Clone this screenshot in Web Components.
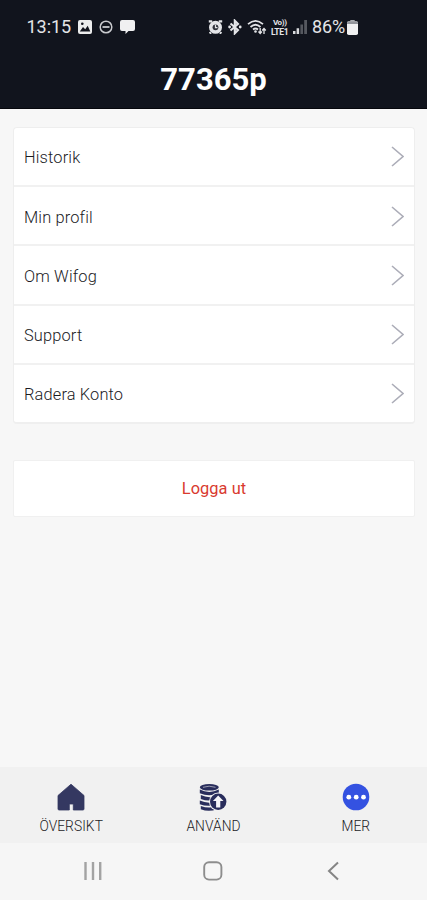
<!DOCTYPE html>
<html lang="sv">
<head>
<meta charset="utf-8">
<title>77365p</title>
<style>
html,body{margin:0;height:100%}
body{font-family:Roboto,"Liberation Sans",sans-serif;background:#f7f7f7;color:#1c1c1f}
</style>
</head>
<body>
<wifog-app></wifog-app>
<script>
function define(name, markup) {
  const template = document.createElement('template');
  template.innerHTML = markup;
  customElements.define(name, class extends HTMLElement {
    constructor() {
      super();
      this.attachShadow({mode: 'open'}).append(template.content.cloneNode(true));
    }
  });
}

define('status-bar', `
<style>
:host{display:flex;align-items:center;height:54px;box-sizing:border-box;padding:0 69px 0 26.5px;color:#e4e5e8;font-size:18px;line-height:20px}
svg{display:block;flex:none}
.left,.right{display:flex;align-items:center}
.right{margin-left:auto}
.time{width:45px;letter-spacing:-.05px}
.lte{width:19px;margin-left:4px;font-size:8.5px;line-height:8px;font-weight:700;letter-spacing:-.3px;white-space:nowrap}
.lte span{display:block;height:8px;line-height:8px}
.lte span:first-child{padding-left:2px;font-size:8px;margin-bottom:1px;letter-spacing:-.3px}
.pct{margin-left:5px;letter-spacing:-.1px}
</style>
<div class="left">
<span class="time">13:15</span>
<svg style="margin-left:6.5px" width="14" height="14" viewBox="0 0 14 14"><rect width="14" height="14" rx="2" fill="#eceded"/><path d="M1.8 11.5 5 7l2.2 2.3L9.7 5.8l2.6 5.7z" fill="#10131c"/><circle cx="4.3" cy="3.8" r="1.3" fill="#10131c"/></svg>
<svg style="margin-left:7px" width="14" height="14" viewBox="0 0 14 14"><circle cx="7" cy="7" r="5.8" fill="none" stroke="#c9cace" stroke-width="1.5"/><path d="M3.5 7h7" stroke="#c9cace" stroke-width="1.8"/></svg>
<svg style="margin-left:7px" width="15" height="14" viewBox="0 0 15 14"><path d="M2 0h11q2 0 2 2v7q0 2-2 2H8.5L5.5 14v-3H2Q0 11 0 9V2Q0 0 2 0z" fill="#f0f0f1"/></svg>
</div>
<div class="right">
<svg width="15" height="14" viewBox="0 0 15 14"><path d="M.8 1.4h3.4M10.8 1.4h3.4M3 12.5l-1.4 1M12 12.5l1.4 1" stroke="#e4e5e8" stroke-width="2.4"/><circle cx="7.5" cy="7.3" r="6.5" fill="#e4e5e8"/><circle cx="7.5" cy="7.3" r="2.9" fill="#30333b"/><path d="M7.5 4.8v2.8h2" fill="none" stroke="#e4e5e8" stroke-width="1.2"/></svg>
<svg style="margin-left:4.5px" width="14" height="16" viewBox="0 0 14 16"><path d="M2.5 4.5 10 11l-3.2 3.3V1.7L10 5l-7.5 6.5" fill="none" stroke="#e4e5e8" stroke-width="2.1"/><circle cx="1.6" cy="8" r="1.4" fill="#e4e5e8"/><circle cx="12.2" cy="8" r="1.4" fill="#e4e5e8"/></svg>
<svg style="margin-left:5px" width="20" height="16" viewBox="0 0 20 16"><g fill="none" stroke="#e4e5e8" stroke-width="1.7"><path d="M1 5.2Q8.5-1.5 16 5.2M3.5 8Q8.5 3.5 13.5 8M6 10.5q2.5-2 5 0"/></g><circle cx="8.5" cy="12.5" r="1.3" fill="#e4e5e8"/><path d="M13.2 9v5M11.5 12.5l1.7 2 1.7-2M17 15v-5M15.2 11.5 17 9.5l1.8 2" fill="none" stroke="#e4e5e8" stroke-width="1.3"/></svg>
<div class="lte"><span>Vo))</span><span>LTE1</span></div>
<svg style="margin-left:3px" width="14" height="14" viewBox="0 0 14 14"><path fill="#d9dadd" d="M0 11h2.5v3H0zM3.6 8.2h2.5V14H3.6z"/><path fill="#55585f" d="M7.4 4.4H10V14H7.4zM11.2 0H14v14h-2.8z"/></svg>
<span class="pct">86%</span>
<svg style="margin-left:2px" width="11" height="15" viewBox="0 0 11 15"><path d="M3.3 0h4.4v1.5H3.3z" fill="#aaacb0"/><rect y="1.3" width="11" height="13.7" rx="1.8" fill="#f0f0f1"/><path d="M0 4V3Q0 1.3 1.8 1.3h7.4Q11 1.3 11 3v1z" fill="#92949a"/></svg>
</div>`);

define('app-header', `
<style>
:host{display:block;height:109px;box-sizing:border-box;background:#11141d;border-bottom:1px solid #06070c}
h1{margin:0;padding-top:6px;text-align:center;font-size:31px;line-height:40px;font-weight:700;color:#fff}
</style>
<status-bar></status-bar>
<h1><slot></slot></h1>`);

define('menu-row', `
<style>
:host{display:flex;align-items:center;justify-content:space-between;height:59.2px;box-sizing:border-box;padding:2.6px 10px 0 10px;border-bottom:2px solid #f1f1f1;font-size:16.4px;line-height:20px;font-weight:300;letter-spacing:.15px}
:host(:last-child){border-bottom:0;height:57.5px;padding-top:1.6px}
:host(:first-child){padding-top:2px}
span{padding-top:1.6px}
:host(:first-child) span{padding-top:0}
svg{display:block;margin-top:-2px}
</style>
<span><slot></slot></span>
<svg width="13" height="21" viewBox="0 0 13 21"><path d="M1 1 12 10.5 1 20" fill="none" stroke="#acadb8" stroke-width="1.6"/></svg>`);

define('menu-card', `
<style>
:host{display:block;box-sizing:border-box;margin:18px 12px 0 13px;border:1px solid #eeeeee;border-bottom:2px solid #efefef;border-radius:4px;background:#fff;overflow:hidden}
</style>
<slot></slot>`);

define('logout-button', `
<style>
:host{display:flex;align-items:center;justify-content:center;box-sizing:border-box;height:57px;margin:36px 12px 0 13px;border:1px solid #f0f0f0;border-radius:2px;background:#fff;color:#d93a2f;font-size:16.4px;letter-spacing:.05px}
</style>
<slot></slot>`);

define('tab-item', `
<style>
:host{display:flex;flex-direction:column;align-items:center;padding-top:16px;font-size:13.8px;font-weight:300;line-height:18px;color:#1c1c1f;letter-spacing:.05px}
.icon{width:28px;height:28px;margin-bottom:6px}
</style>
<div class="icon"><slot name="icon"></slot></div>
<span><slot></slot></span>`);

define('tab-bar', `
<style>
:host{display:grid;grid-template-columns:repeat(3,1fr);height:76px;background:#f1f1f1}
svg{display:block}
</style>
<tab-item><svg slot="icon" width="28" height="28" viewBox="0 0 28 28"><path d="M14 1.2 27 12.5V26q0 1-1 1H16.3v-6h-4v6H2q-1 0-1-1V12.5z" fill="#343861" stroke="#343861" stroke-width=".8" stroke-linejoin="round"/></svg>ÖVERSIKT</tab-item>
<tab-item><svg slot="icon" width="28" height="28" viewBox="0 0 28 28"><g fill="#292d5c"><ellipse cx="10.3" cy="4.3" rx="9.5" ry="3.3"/><path d="M.8 6.5q9.5 4.8 19 0v3.7q-9.5 4.3-19 0zM1.8 12q8 4 17 .5v3.5q-9 3.2-17 0zM.8 17.5q8.5 4 18 .5v3.2q-9.5 3.3-18 0zM1.8 23q8 3 16 .3v2.9q-8 3-16 0z"/></g><path d="M4 4.3q6-2.2 12.5 0" stroke="#9a9cb0" fill="none"/><circle cx="19.2" cy="18.8" r="9.2" fill="#f1f1f1"/><circle cx="19.2" cy="18.8" r="8.2" fill="#292d5c"/><path d="M19.2 12.4 24.5 18h-3.2v6.5h-4.2V18h-3.2z" fill="#f5f5f8"/></svg>ANVÄND</tab-item>
<tab-item><svg slot="icon" width="28" height="28" viewBox="0 0 28 28"><circle cx="14" cy="14" r="13.3" fill="#3452e1"/><g fill="#fff"><circle cx="6.8" cy="14.2" r="2.4"/><circle cx="14.2" cy="14.2" r="2.4"/><circle cx="21.5" cy="14.2" r="2.4"/></g></svg>MER</tab-item>`);

define('system-nav', `
<style>
:host{display:grid;grid-template-columns:1fr 1fr 1fr;align-items:center;height:57px;box-sizing:border-box;background:#f6f6f6;padding:0 34px 2px 33px}
svg{display:block;justify-self:center}
</style>
<svg width="20" height="20" viewBox="0 0 20 20"><path d="M2.5 1v18M10 1v18M17.2 1v18" stroke="#a3a3a3" stroke-width="2.4"/></svg>
<svg width="20" height="20" viewBox="0 0 20 20"><rect x="1.2" y="1.2" width="17.2" height="17.4" rx="4.8" fill="none" stroke="#8d8d8d" stroke-width="1.9"/></svg>
<svg width="12" height="20" viewBox="0 0 12 20"><path d="M11 1.5 2 10l9 8.5" fill="none" stroke="#858585" stroke-width="2"/></svg>`);

define('wifog-app', `
<style>
:host{display:flex;flex-direction:column;height:900px;background:#f7f7f7;overflow:hidden}
tab-bar{margin-top:auto}
</style>
<app-header>77365p</app-header>
<menu-card>
<menu-row>Historik</menu-row>
<menu-row>Min profil</menu-row>
<menu-row>Om Wifog</menu-row>
<menu-row>Support</menu-row>
<menu-row>Radera Konto</menu-row>
</menu-card>
<logout-button>Logga ut</logout-button>
<tab-bar></tab-bar>
<system-nav></system-nav>`);
</script>
</body>
</html>
